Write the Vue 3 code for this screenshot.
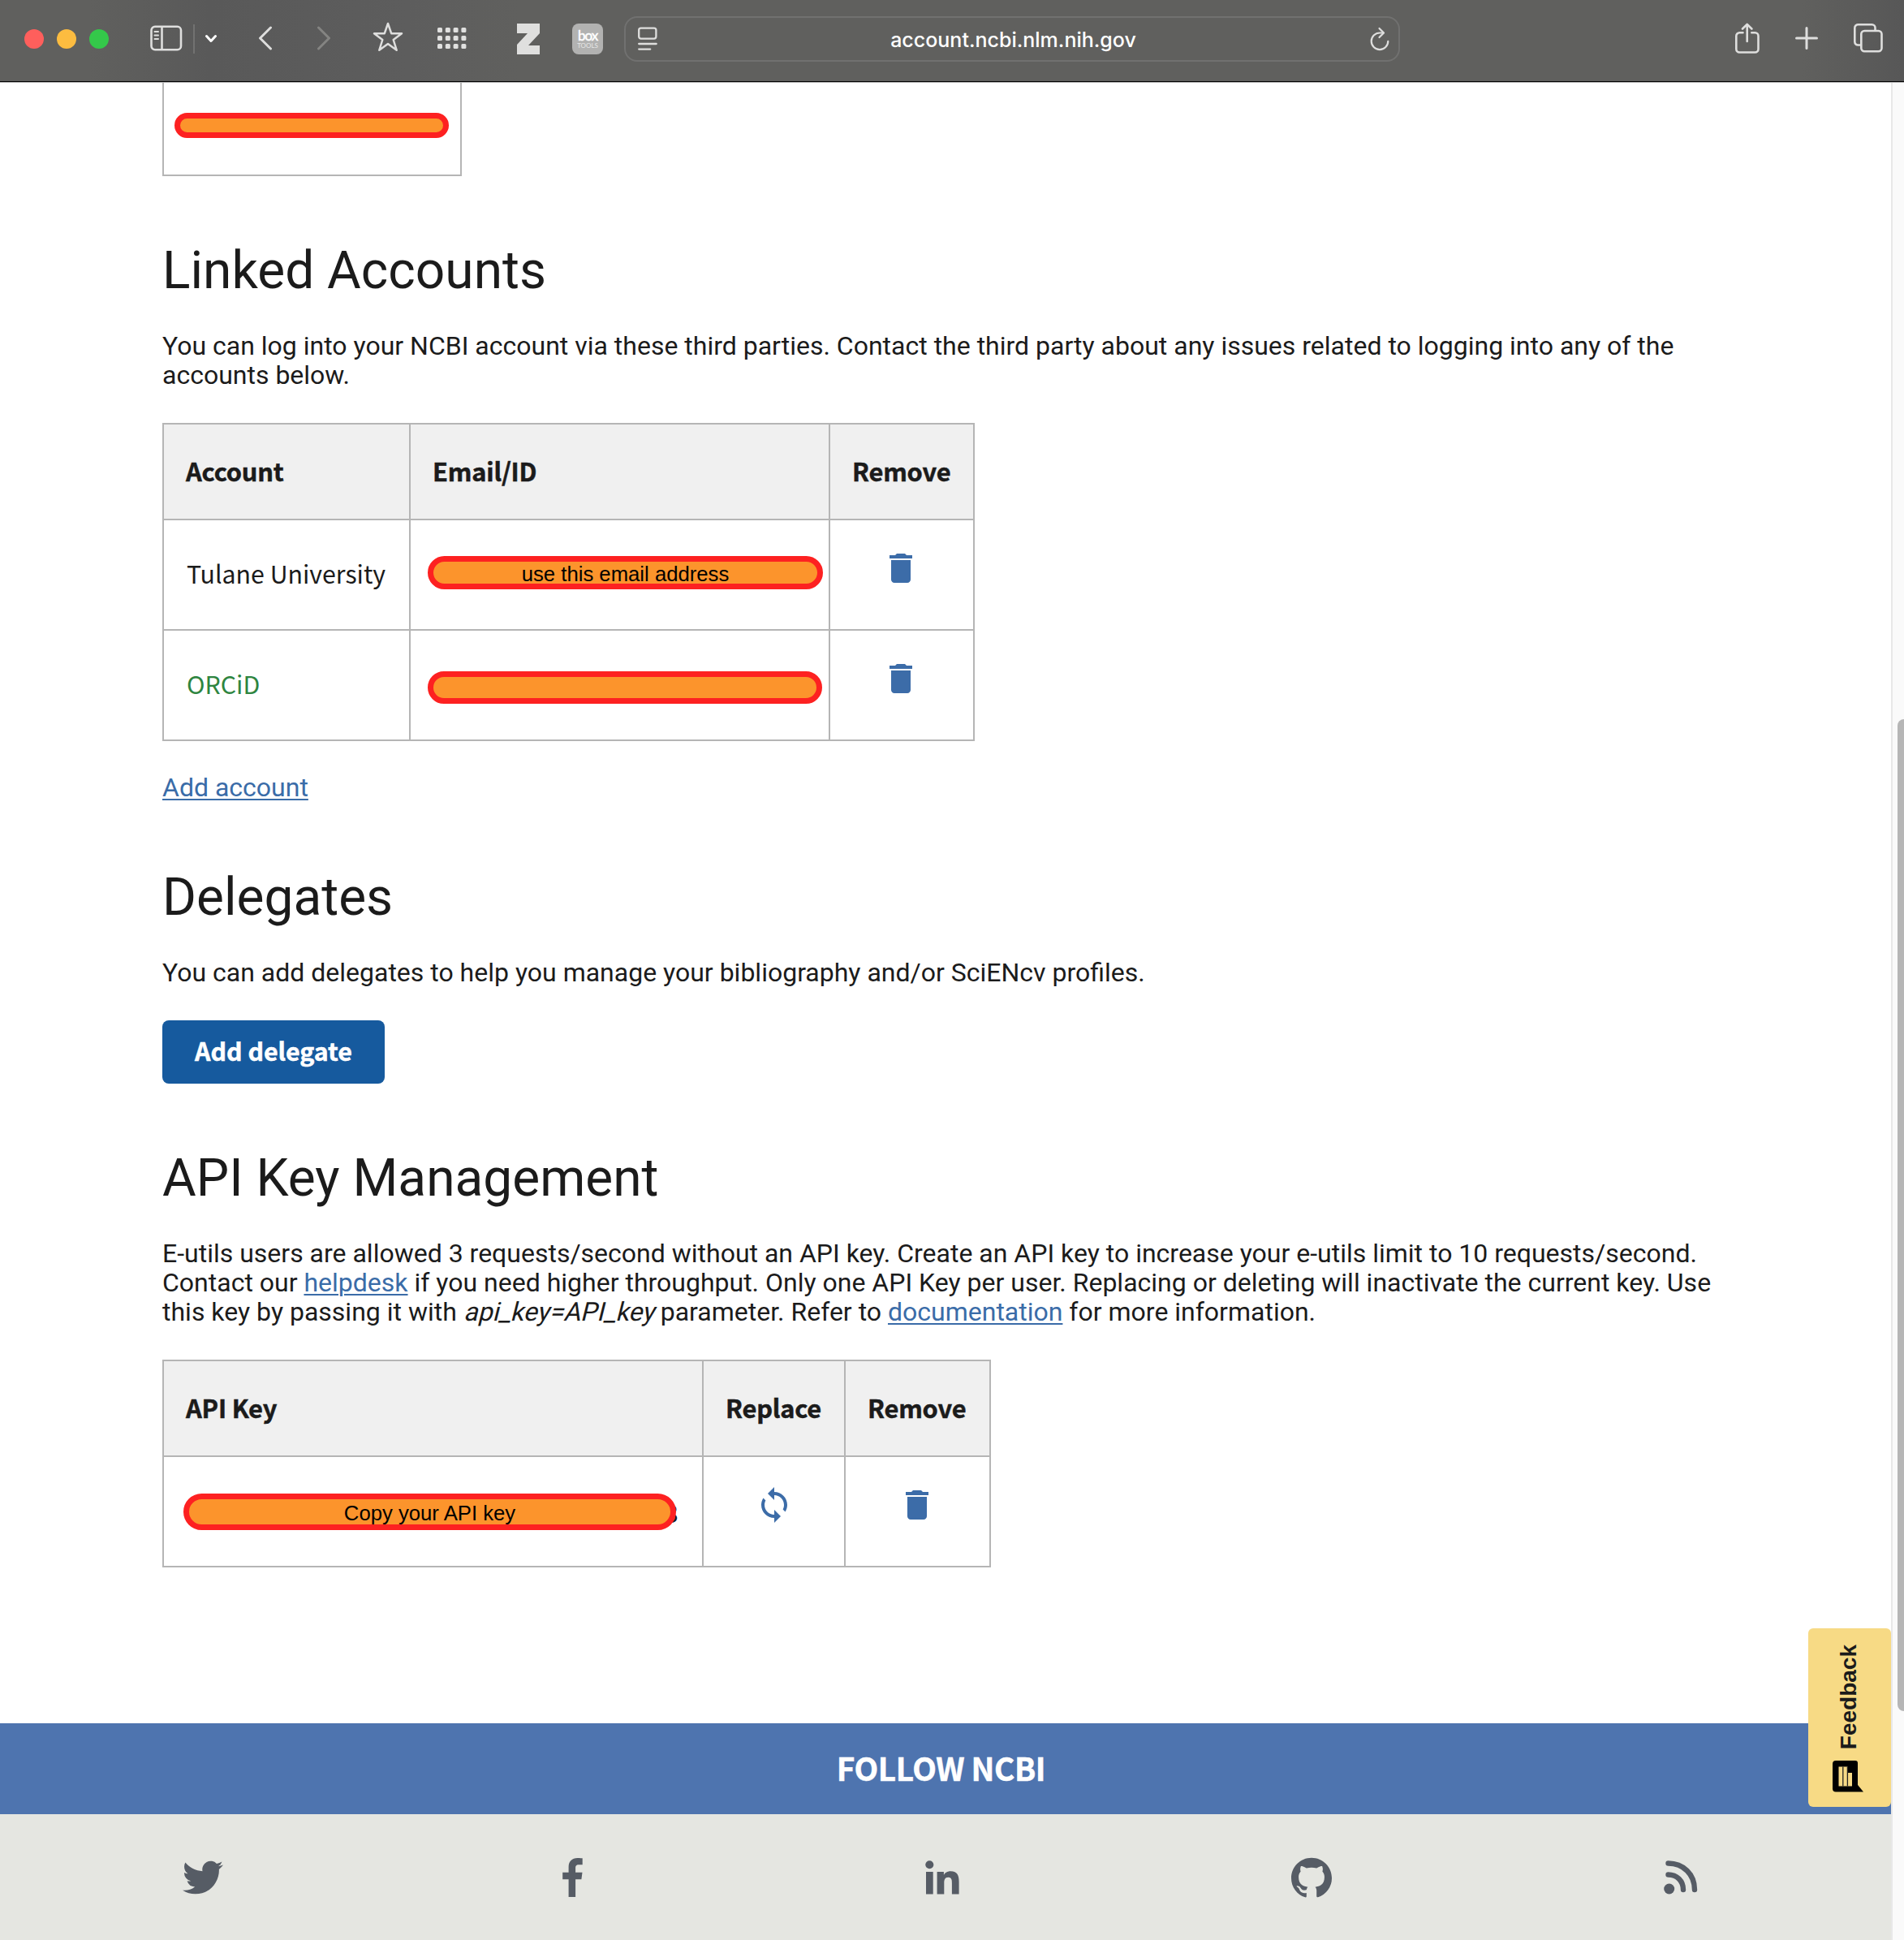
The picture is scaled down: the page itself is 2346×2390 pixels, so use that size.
<script setup>
const trash = 'M6 19c0 1.1.9 2 2 2h8c1.1 0 2-.9 2-2V7H6v12zM19 4h-3.500l-1-1h-5l-1 1H5v2h14V4z'
const accounts = [
  { name: 'Tulane University', cls: '', note: 'use this email address', pill: 'pill-email' },
  { name: 'ORCiD', cls: 'orcid', note: '', pill: 'pill-orcid' },
]
const dots = []
for (let r = 0; r < 3; r++) for (let c = 0; c < 4; c++) dots.push({ x: c * 9.8, y: r * 10 })
</script>

<template>
  <div class="window">
    <header class="toolbar">
      <div class="lights"><i class="red"></i><i class="yellow"></i><i class="green"></i></div>
      <svg class="ic sidebar" width="40" height="32" viewBox="0 0 40 32" fill="none" stroke="#dededd" stroke-width="2.600">
        <rect x="1.500" y="1.800" width="36.500" height="28.400" rx="4.500" />
        <path d="M14.500 2v28" />
        <path d="M5.500 8h4.500M5.500 12.500h4.500M5.500 17h4.500" stroke-width="2" stroke-linecap="round" />
      </svg>
      <i class="divider"></i>
      <svg class="ic chev" width="16" height="12" viewBox="0 0 16 12" fill="none" stroke="#fff" stroke-width="3" stroke-linecap="round" stroke-linejoin="round"><path d="M2.500 2.500 8 8.500l5.500-6" /></svg>
      <svg class="ic back" width="18" height="30" viewBox="0 0 18 30" fill="none" stroke="#dededd" stroke-width="3" stroke-linecap="round" stroke-linejoin="round"><path d="M15.500 2 2.500 15l13 13" /></svg>
      <svg class="ic fwd" width="18" height="30" viewBox="0 0 18 30" fill="none" stroke="#848482" stroke-width="3" stroke-linecap="round" stroke-linejoin="round"><path d="M2.500 2l13 13-13 13" /></svg>
      <svg class="ic star" width="38" height="37" viewBox="0 0 38 37" fill="none" stroke="#dededd" stroke-width="2.500" stroke-linejoin="round"><path d="M19 2l4.200 12.200H36L25.700 22l4 12.800L19 27 8.300 34.800l4-12.800L2 14.200h12.800z" /></svg>
      <svg class="ic dots" width="36" height="26" viewBox="0 0 36 26" fill="#e0e0df"><rect v-for="(d, i) in dots" :key="i" :x="d.x" :y="d.y" width="6" height="6" rx="1.500" /></svg>
      <svg class="ic zot" width="28" height="38" viewBox="0 0 28 38" fill="#dfdfde"><path d="M0 0h28v12L14 27h14v11H0V26l13-14H0z" /></svg>
      <div class="boxtools"><b>box</b><span>TOOLS</span></div>
      <div class="address">
        <svg width="24" height="30" viewBox="0 0 24 30" fill="none" stroke="#dededd" stroke-width="2.300" stroke-linecap="round">
          <rect x="1.200" y="1.600" width="21.200" height="13" rx="2.500" /><path d="M1.200 21h21.500M1.200 27.600h14" />
        </svg>
        <span class="url">account.ncbi.nlm.nih.gov</span>
        <svg width="26" height="30" viewBox="0 0 26 30" fill="none" stroke="#dededd" stroke-width="2.200" stroke-linecap="round" stroke-linejoin="round">
          <path d="M17.500 7.500H13a10.300 10.300 0 1 0 10.300 10.300" /><path d="M12.500 2l5.500 5.500-5.500 5.500" />
        </svg>
      </div>
      <svg class="ic share" width="30" height="38" viewBox="0 0 30 38" fill="none" stroke="#dededd" stroke-width="2.600" stroke-linecap="round" stroke-linejoin="round">
        <path d="M9.500 12.300H5.300a4 4 0 0 0-4 4v16.200a4 4 0 0 0 4 4h19.200a4 4 0 0 0 4-4V16.300a4 4 0 0 0-4-4h-4.200" /><path d="M14.700 23V2M9 7.500l5.700-5.700 5.700 5.700" />
      </svg>
      <svg class="ic plus" width="28" height="28" viewBox="0 0 28 28" stroke="#dededd" stroke-width="3" stroke-linecap="round"><path d="M14 1.500v25M1.500 14h25" /></svg>
      <svg class="ic tabs" width="36" height="36" viewBox="0 0 36 36" fill="none" stroke="#dededd" stroke-width="2.600">
        <path d="M9 26.500H5.300a4 4 0 0 1-4-4V5.300a4 4 0 0 1 4-4h17.200a4 4 0 0 1 4 4V8.500" /><rect x="9.300" y="9" width="25.200" height="25.200" rx="4" />
      </svg>
    </header>

    <div class="view">
      <div class="page">
        <main>
          <div class="fragment"><div class="pill pill-top"></div></div>

          <h2>Linked Accounts</h2>
          <p>You can log into your NCBI account via these third parties. Contact the third party about any issues related to logging into any of the<br />accounts below.</p>
          <div class="table accounts">
            <div class="th">Account</div>
            <div class="th">Email/ID</div>
            <div class="th">Remove</div>
            <template v-for="a in accounts" :key="a.name">
              <div class="td" :class="a.cls">{{ a.name }}</div>
              <div class="td note"><div class="pill" :class="a.pill">{{ a.note }}</div></div>
              <div class="td action remove"><svg width="48" height="48" viewBox="0 0 24 24"><path :d="trash" /></svg></div>
            </template>
          </div>
          <p class="after"><a>Add account</a></p>

          <h2>Delegates</h2>
          <p>You can add delegates to help you manage your bibliography and/or SciENcv profiles.</p>
          <button class="btn">Add delegate</button>

          <h2>API Key Management</h2>
          <p>E-utils users are allowed 3 requests/second without an API key. Create an API key to increase your e-utils limit to 10 requests/second.<br />Contact our <a>helpdesk</a> if you need higher throughput. Only one API Key per user. Replacing or deleting will inactivate the current key. Use<br />this key by passing it with <em>api_key=API_key</em> parameter. Refer to <a>documentation</a> for more information.</p>
          <div class="table keys">
            <div class="th">API Key</div>
            <div class="th">Replace</div>
            <div class="th">Remove</div>
            <div class="td note"><span class="keytail">3</span><div class="pill pill-key">Copy your API key</div></div>
            <div class="td action"><svg width="48" height="48" viewBox="0 0 24 24"><path d="M12 4V1L8 5l4 4V6c3.310 0 6 2.690 6 6 0 1.010-.250 1.970-.700 2.800l1.460 1.460C19.540 15.030 20 13.570 20 12c0-4.420-3.580-8-8-8zm0 14c-3.310 0-6-2.690-6-6 0-1.010.250-1.970.700-2.800L5.240 7.740C4.460 8.970 4 10.430 4 12c0 4.420 3.580 8 8 8v3l4-4-4-4v3z" /></svg></div>
            <div class="td action remove"><svg width="48" height="48" viewBox="0 0 24 24"><path :d="trash" /></svg></div>
          </div>
        </main>

        <div class="follow"><span>FOLLOW NCBI</span></div>
        <footer>
          <div><svg width="50" height="50" viewBox="0 0 24 24"><path d="M23.950 4.570a10 10 0 0 1-2.820.770 4.960 4.960 0 0 0 2.160-2.720c-.950.550-2 .960-3.130 1.180a4.920 4.920 0 0 0-8.380 4.480C7.690 8.100 4.070 6.130 1.640 3.160a4.820 4.820 0 0 0-.670 2.480c0 1.710.870 3.210 2.190 4.100a4.900 4.900 0 0 1-2.230-.620v.060a4.920 4.920 0 0 0 3.950 4.830 5 5 0 0 1-2.210.080 4.940 4.940 0 0 0 4.600 3.420A9.870 9.870 0 0 1 0 19.540a13.990 13.990 0 0 0 7.550 2.210c9.050 0 14-7.500 14-13.980 0-.210 0-.420-.020-.630a9.940 9.940 0 0 0 2.460-2.550z" /></svg></div>
          <div><svg width="26" height="50" viewBox="-.700 0 26 50"><path d="M7.900 49V27.300H.5v-8.600h7.400v-6.600C7.900 5 12.200 1 18.800 1c3.100 0 5.900.230 6.200.330v7.800h-4.500c-3.500 0-4.100 1.700-4.100 4.100v5.470h8.400l-1.100 8.600h-7.300V49z" /></svg></div>
          <div><svg width="42" height="42" viewBox="0 0 42 42"><circle cx="5.300" cy="5.200" r="5" /><path d="M1 13.900h8.700V41.500H1zM14.600 13.900h8.300v3.800h.100c1.200-2.200 4-4.500 8.200-4.500 8.800 0 10.400 5.800 10.400 13.300v15h-8.700V28.100c0-3.200 0-7.300-4.400-7.300-4.500 0-5.200 3.500-5.200 7.100v13.600h-8.700z" /></svg></div>
          <div><svg width="50" height="50" viewBox="0 0 24 24"><path d="M12 .3C5.370.3 0 5.670 0 12.300c0 5.300 3.440 9.800 8.200 11.390.6.110.820-.260.820-.580v-2.040c-3.340.720-4.040-1.610-4.040-1.610-.550-1.390-1.340-1.760-1.340-1.760-1.080-.740.090-.730.090-.730 1.200.090 1.840 1.240 1.840 1.240 1.070 1.840 2.810 1.300 3.490 1 .110-.780.420-1.310.760-1.610-2.660-.300-5.470-1.330-5.470-5.930 0-1.310.470-2.380 1.240-3.220-.140-.300-.540-1.520.110-3.180 0 0 1.010-.320 3.300 1.230a11.500 11.500 0 0 1 6 0c2.290-1.550 3.300-1.230 3.300-1.230.650 1.660.240 2.880.120 3.180.770.840 1.230 1.910 1.230 3.220 0 4.610-2.800 5.620-5.480 5.920.420.360.810 1.100.810 2.220v3.290c0 .320.220.690.830.570A12 12 0 0 0 24 12.300C24 5.670 18.630.3 12 .3" /></svg></div>
          <div><svg width="42" height="42" viewBox="0 0 42 42"><circle cx="6.700" cy="35" r="6.500" /><path d="M5.500 17.500C16 17.500 24 25 24 36M5.500 3.500C24 3.500 38 17 38 36" fill="none" stroke="#565c65" stroke-width="6.400" stroke-linecap="round" /></svg></div>
        </footer>
      </div>
      <div class="track"><i class="thumb"></i></div>
      <div class="feedback">
        <svg width="38" height="40" viewBox="0 0 38 40"><path d="M4 0h24a3 3 0 0 1 3 3v27l7 8.500H4a4 4 0 0 1-4-4V4a4 4 0 0 1 4-4z" /><path d="M7.500 7.500h11v24h-11zM18.500 15h5.500v16.500h-5.500z" fill="#f7da85" /><path d="M12.800 7.500v24M18.400 7.500v24" stroke="#222" stroke-width="1.300" /></svg>
        <span>Feedback</span>
      </div>
    </div>
  </div>
</template>

<style>
body { margin: 0; background: #fff; }
</style>

<style scoped>
* { box-sizing: border-box; }
.window { width: 2346px; height: 2390px; overflow: hidden; display: flex; flex-direction: column; font-family: Roboto, sans-serif; color: #1b1b1b; }
.toolbar { height: 102px; flex: none; display: flex; align-items: flex-start; background: linear-gradient(90deg, #60605e 0, #60605e 110px, #595959 260px, #5d5d5d 500px, #60605e 640px, #60605e 2220px, #575757 2346px); border-bottom: 1px solid #b5b5b5; box-shadow: inset 0 -1px #000; }
.lights { display: flex; gap: 16px; margin: 36px 0 0 30px; }
.lights i { width: 24px; height: 24px; border-radius: 50%; }
.red { background: #ff5f5c; }
.yellow { background: #fcbc40; }
.green { background: #34c84a; }
.ic { flex: none; display: block; }
.sidebar { margin: 31px 0 0 51px; }
.divider { width: 2px; height: 36px; margin: 30px 0 0 13px; background: #727271; }
.chev { margin: 42px 0 0 12px; }
.back { margin: 32px 0 0 50px; }
.fwd { margin: 32px 0 0 54px; }
.star { margin: 27px 0 0 51px; }
.dots { margin: 34px 0 0 42px; }
.zot { margin: 29px 0 0 62px; }
.boxtools { width: 38px; height: 38px; margin: 29px 0 0 40px; flex: none; border-radius: 8px; background: #b2b2b1; color: #fff; display: flex; flex-direction: column; align-items: center; font-family: Lato, sans-serif; }
.boxtools b { font-size: 17px; line-height: 16px; font-weight: 400; margin-top: 7px; letter-spacing: -1px; -webkit-text-stroke: .5px #fff; }
.boxtools span { font-size: 8px; line-height: 9px; color: #e6e6e6; }
.address { width: 956px; height: 56px; margin: 20px 0 0 26px; flex: none; border: 2px solid #717170; border-radius: 16px; display: flex; align-items: center; justify-content: space-between; padding: 0 10px 0 15px; }
.url { font: 500 25px/50px Inter, sans-serif; padding-top: 2px; color: #fff; }
.share { margin: 28px 0 0 413px; }
.plus { margin: 33px 0 0 44px; }
.tabs { margin: 29px 0 0 44px; }

.view { position: relative; flex: 1; display: flex; }
.page { width: 2330px; display: flex; flex-direction: column; }
main { height: 2021px; flex: none; padding-left: 200px; }
.fragment { width: 369px; height: 115px; border: 2px solid #b5b5b5; border-top: 0; padding: 37px 0 0 13px; }
.pill { border: 7px solid #fd2121; background: #fc942c; border-radius: 30px; font-family: "Liberation Sans", sans-serif; color: #000; text-align: center; white-space: nowrap; font-size: 25.700px; }
.pill-top { width: 338px; height: 31px; }
h2 { font-size: 64px; line-height: 72px; font-weight: 400; margin: 81px 0 38px; }
.after + h2 { margin-top: 82px; }
p { font-size: 32px; line-height: 36px; margin: 0 0 41px; white-space: nowrap; }
p.after { margin: 39px 0 0; }
em { display: inline-block; font-style: normal; line-height: 36px; vertical-align: baseline; transform: skewX(-14deg); transform-origin: 0 29px; }
a { color: #3a6ca8; text-decoration: underline; text-decoration-thickness: 2px; text-underline-offset: 3px; }
.table { display: grid; gap: 2px; padding: 2px; background: #b5b5b5; font-family: "Noto Sans CJK SC", sans-serif; font-size: 30.300px; line-height: 36px; white-space: nowrap; }
.accounts { width: 1001px; grid-template-columns: 302px 515px 176px; grid-template-rows: 116px 134px 134px; }
.keys { width: 1021px; grid-template-columns: 663px 173px 177px; grid-template-rows: 116px 134px; }
.th { background: #f0f0f0; font-weight: 700; font-size: 30.800px; letter-spacing: -.200px; -webkit-text-stroke: .5px #1b1b1b; padding: 39px 0 0 27px; }
.td { background: #fff; padding: 47px 0 0 28px; }
.orcid { color: #2e8540; }
.note { padding: 0; }
.action { padding: 35px 0 0; display: flex; justify-content: center; align-items: flex-start; }
.remove { padding-right: 2px; }
.action svg { fill: #3c6ca8; }
.pill-email { width: 487px; height: 41px; margin: 44px 0 0 21px; line-height: 31px; }
.pill-orcid { width: 486px; height: 40px; margin: 50px 0 0 21px; }
.keys .note { position: relative; }
.pill-key { position: relative; width: 607px; height: 45px; margin: 45px 0 0 24px; line-height: 35px; }
.keytail { position: absolute; left: 617px; top: 50px; }
.btn { display: block; width: 274px; height: 78px; border: 0; border-radius: 8px; padding: 0 0 4px; background: #165a9e; color: #fff; font: 700 30.300px/36px "Noto Sans CJK SC", sans-serif; -webkit-text-stroke: .5px #fff; white-space: nowrap; }
.follow { height: 112px; flex: none; background: #4e74af; color: #fff; font: 700 38.600px/108px "Noto Sans CJK SC", sans-serif; letter-spacing: -.400px; -webkit-text-stroke: .5px #fff; text-align: center; padding-right: 11px; }
footer { flex: 1; background: #e5e6e1; display: flex; padding: 0 31px 0 22px; }
footer div { flex: 1; display: flex; justify-content: center; align-items: center; padding-bottom: 0; }
footer svg { fill: #565c65; overflow: visible; }
.track { width: 16px; background: #fafafa; border-left: 2px solid #e8e8e8; padding: 784px 0 0 6px; }
.thumb { display: block; width: 16px; height: 1222px; border-radius: 8px; background: #b6b6b6; }
.feedback { position: absolute; left: 2228px; top: 1904px; width: 102px; height: 220px; border-radius: 6px; background: #f7da85; display: flex; flex-direction: column-reverse; align-items: center; padding: 0 0 17px; }
.feedback svg { margin-left: -4px; }
.feedback span { writing-mode: vertical-rl; transform: rotate(180deg); font: 700 28px/36px "Liberation Sans", sans-serif; margin: 0 2px 14px 0; }
</style>
